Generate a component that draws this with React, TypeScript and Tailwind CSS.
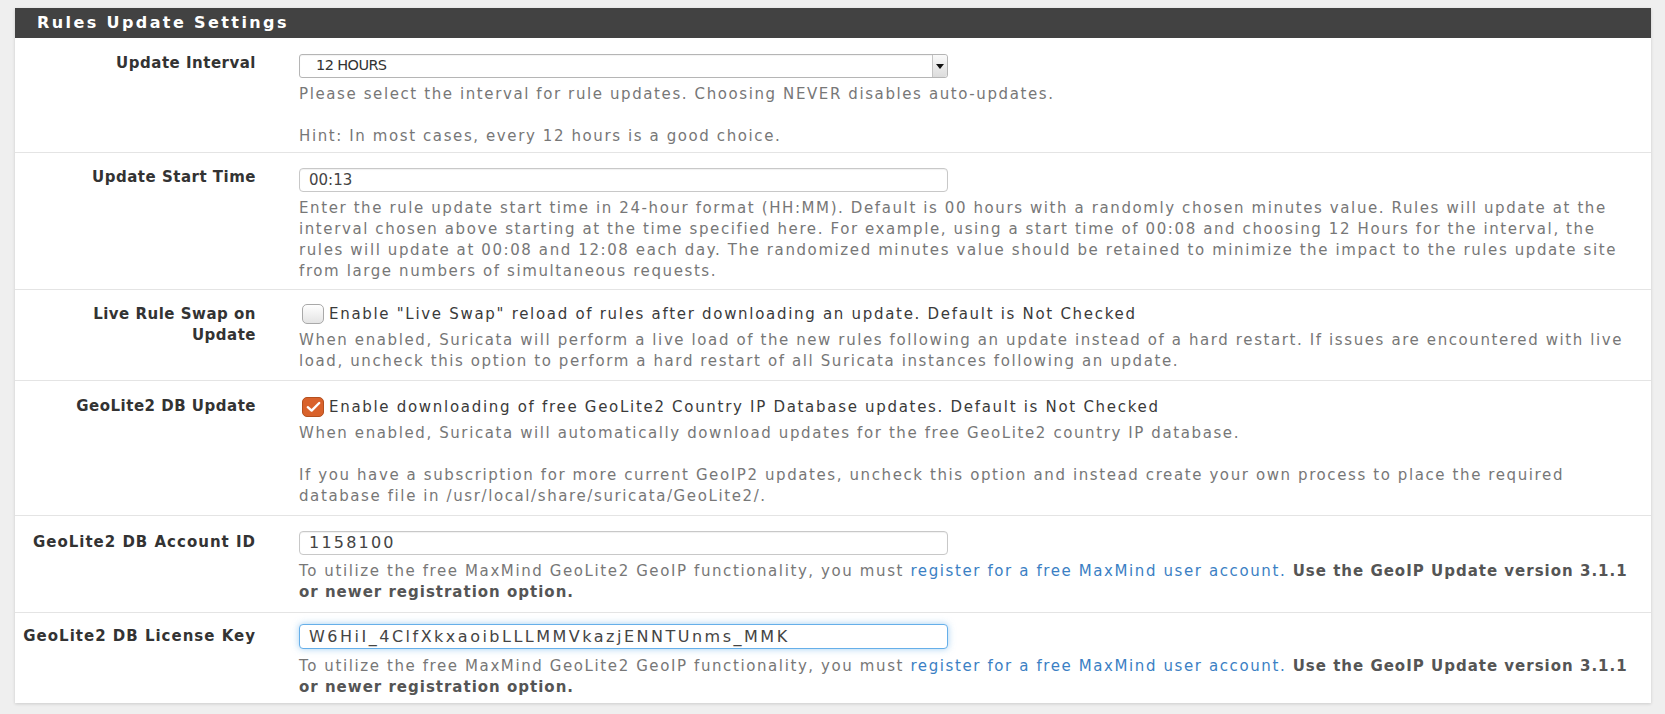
import React from "react";

const font = { fontFamily: '"DejaVu Sans", "Noto Sans", sans-serif' };

function Label({ children, pt, wide }: { children: React.ReactNode; pt: string; wide?: boolean }) {
  return (
    <div
      className={`w-[284px] shrink-0 pr-[43px] text-right font-bold text-[15px] leading-[21px] text-[#333] ${
        wide ? "pl-[4px] tracking-[1px]" : "pl-[15px] tracking-[0.5px]"
      } ${pt}`}
    >
      {children}
    </div>
  );
}

function Help({ children, mt }: { children: React.ReactNode; mt: string }) {
  return (
    <div className={`${mt} text-[15px] leading-[21px] tracking-[1.6px] text-[#777]`}>{children}</div>
  );
}

function Checkbox({ checked }: { checked?: boolean }) {
  if (checked) {
    return (
      <span className="mr-[5px] flex h-[20px] w-[22px] shrink-0 items-center justify-center rounded-[5px] border border-[#b4501f] bg-[#d9622b]">
        <svg width="15" height="12" viewBox="0 0 15 12" fill="none">
          <path d="M1.8 6.2 L5.6 9.6 L13.2 2" stroke="#fff" strokeWidth="2.4" strokeLinecap="round" strokeLinejoin="round" />
        </svg>
      </span>
    );
  }
  return (
    <span className="mr-[5px] h-[20px] w-[22px] shrink-0 rounded-[5px] border border-[#a9a9a9] bg-gradient-to-b from-[#ffffff] to-[#e4e4e4]" />
  );
}

function TextInput({
  value,
  focused,
  h,
  text,
}: {
  value: string;
  focused?: boolean;
  h: string;
  text: string;
}) {
  return (
    <div
      className={`flex ${h} w-[649px] items-center rounded-[4px] border bg-white pl-[9px] text-[#444] ${text} ${
        focused
          ? "border-[#66afe9] shadow-[0_0_7px_rgba(102,175,233,0.6)]"
          : "border-[#c8c8c8] shadow-[inset_0_1px_1px_rgba(0,0,0,0.06)]"
      }`}
    >
      {value}
    </div>
  );
}

function GeoHelp({ mt }: { mt: string }) {
  return (
    <Help mt={mt}>
      <span>To utilize the free MaxMind GeoLite2 GeoIP functionality, you must </span>
      <a className="text-[#3b7fc4]">register for a free MaxMind user account.</a>{" "}
      <b className="tracking-[1px] text-[#555]">Use the GeoIP Update version 3.1.1 or newer registration option.</b>
    </Help>
  );
}

export default function App() {
  return (
    <div className="min-h-[714px] bg-[#efefef] pt-[8px] pl-[15px] pr-[14px] pb-[11px]" style={font}>
      <div className="bg-white shadow-[0_1px_3px_rgba(0,0,0,0.15)]">
        <div className="flex h-[30px] items-center bg-[#424242] pl-[22px] text-[16px] font-bold tracking-[2.4px] text-white">
          Rules Update Settings
        </div>

        {/* Row 1 */}
        <div className="flex">
          <Label pt="pt-[15px]">Update Interval</Label>
          <div className="min-w-0 flex-1 pt-[16px] pb-[5px] pr-[10px]">
            <div className="flex h-[24px] w-[649px] items-stretch rounded-[3px] border border-[#b5b5b5] bg-white shadow-[inset_0_1px_1px_rgba(0,0,0,0.05)]">
              <div className="flex flex-1 items-center pl-[16px] text-[14.5px] tracking-[-0.6px] text-[#333]">12 HOURS</div>
              <div className="flex w-[15px] items-center justify-center rounded-r-[3px] border-l border-[#c4c4c4] bg-gradient-to-b from-[#fafafa] to-[#dcdcdc]">
                <svg width="8" height="5" viewBox="0 0 8 5">
                  <path d="M0 0 H8 L4 5 Z" fill="#111" />
                </svg>
              </div>
            </div>
            <Help mt="mt-[6px]">
              Please select the interval for rule updates. Choosing NEVER disables auto-updates.
              <br />
              <br />
              Hint: In most cases, every 12 hours is a good choice.
            </Help>
          </div>
        </div>

        {/* Row 2 */}
        <div className="flex border-t border-[#e4e4e4]">
          <Label pt="pt-[14px]">Update Start Time</Label>
          <div className="min-w-0 flex-1 pt-[15px] pb-[7px] pr-[10px]">
            <TextInput value="00:13" h="h-[24px]" text="text-[15px] tracking-[0px]" />
            <Help mt="mt-[6px]">
              Enter the rule update start time in 24-hour format (HH:MM). Default is 00 hours with a randomly chosen
              minutes value. Rules will update at the interval chosen above starting at the time specified here. For
              example, using a start time of 00:08 and choosing 12 Hours for the interval, the rules will update at
              00:08 and 12:08 each day. The randomized minutes value should be retained to minimize the impact to the
              rules update site from large numbers of simultaneous requests.
            </Help>
          </div>
        </div>

        {/* Row 3 */}
        <div className="flex border-t border-[#e4e4e4]">
          <Label pt="pt-[14px]">Live Rule Swap on Update</Label>
          <div className="min-w-0 flex-1 pt-[11px] pb-[8px] pr-[10px]">
            <div className="flex h-[26px] items-center pl-[3px] text-[15px] tracking-[1.7px] text-[#3a3a3a]">
              <Checkbox />
              Enable "Live Swap" reload of rules after downloading an update. Default is Not Checked
            </div>
            <Help mt="mt-[3px]">
              When enabled, Suricata will perform a live load of the new rules following an update instead of a hard
              restart. If issues are encountered with live load, uncheck this option to perform a hard restart of all
              Suricata instances following an update.
            </Help>
          </div>
        </div>

        {/* Row 4 */}
        <div className="flex border-t border-[#e4e4e4]">
          <Label pt="pt-[15px]">GeoLite2 DB Update</Label>
          <div className="min-w-0 flex-1 pt-[13px] pb-[8px] pr-[10px]">
            <div className="flex h-[26px] items-center pl-[3px] text-[15px] tracking-[1.7px] text-[#3a3a3a]">
              <Checkbox checked />
              Enable downloading of free GeoLite2 Country IP Database updates. Default is Not Checked
            </div>
            <Help mt="mt-[3px]">
              When enabled, Suricata will automatically download updates for the free GeoLite2 country IP database.
              <br />
              <br />
              If you have a subscription for more current GeoIP2 updates, uncheck this option and instead create your
              own process to place the required database file in /usr/local/share/suricata/GeoLite2/.
            </Help>
          </div>
        </div>

        {/* Row 5 */}
        <div className="flex border-t border-[#e4e4e4]">
          <Label pt="pt-[16px]" wide>
            GeoLite2 DB Account ID
          </Label>
          <div className="min-w-0 flex-1 pt-[15px] pb-[9px] pr-[8px]">
            <TextInput value="1158100" h="h-[24px]" text="text-[16px] tracking-[2.2px]" />
            <GeoHelp mt="mt-[6px]" />
          </div>
        </div>

        {/* Row 6 */}
        <div className="flex border-t border-[#e4e4e4]">
          <Label pt="pt-[13px]" wide>
            GeoLite2 DB License Key
          </Label>
          <div className="min-w-0 flex-1 pt-[11px] pb-[5px] pr-[8px]">
            <TextInput
              value="W6HiI_4ClfXkxaoibLLLMMVkazjENNTUnms_MMK"
              h="h-[25px]"
              text="text-[16px] tracking-[2.5px]"
              focused
            />
            <GeoHelp mt="mt-[7px]" />
          </div>
        </div>
      </div>
    </div>
  );
}
